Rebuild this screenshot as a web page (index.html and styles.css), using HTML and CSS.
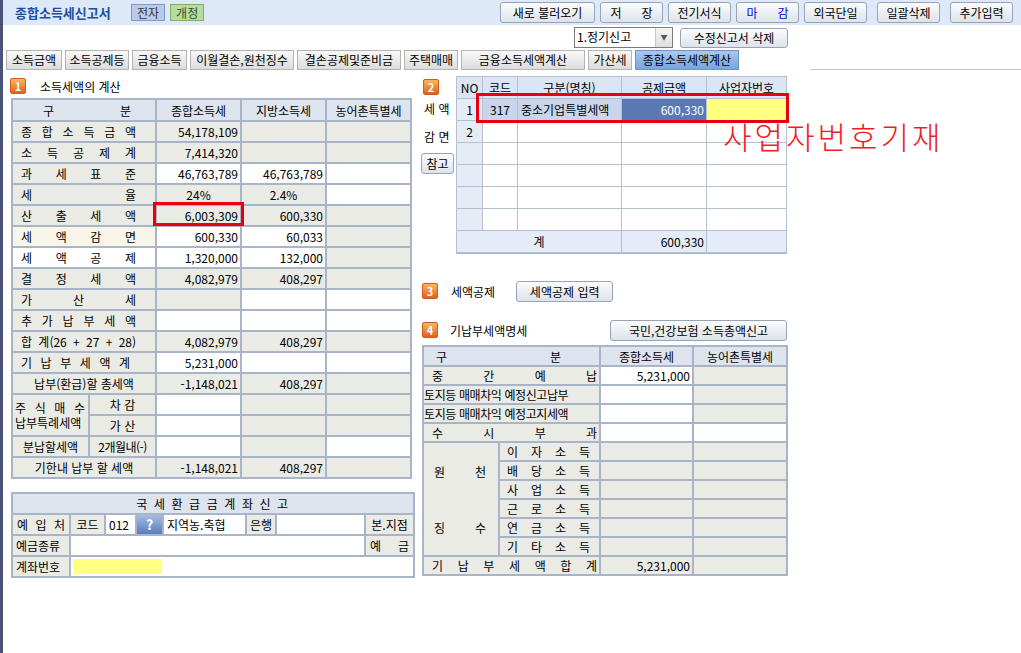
FILE: index.html
```html
<!DOCTYPE html>
<html lang="ko">
<head>
    <meta charset="UTF-8">
    <title>종합소득세신고서</title>
    <link rel="stylesheet" href="styles.css">
</head>
<body>
<div class="page">
    <header class="topbar">
        <h1>종합소득세신고서</h1>
        <span class="tag tag-blue">전자</span>
        <span class="tag tag-green">개정</span>
        <div class="top-actions">
            <button class="btn b-reload">새로 불러오기</button>
            <button class="btn b-save">저&nbsp;&nbsp;&nbsp;&nbsp;&nbsp;&nbsp;장</button>
            <button class="btn b-std">전기서식</button>
            <button class="btn b-close">마&nbsp;&nbsp;&nbsp;&nbsp;&nbsp;&nbsp;감</button>
            <button class="btn b-std">외국단일</button>
            <button class="btn b-std b-gap">일괄삭제</button>
            <button class="btn b-std b-gap">추가입력</button>
        </div>
    </header>

    <div class="subbar">
        <div class="select">
            <span class="select-text">1.정기신고</span>
            <span class="select-arrow">▼</span>
        </div>
        <button class="btn b-delete">수정신고서 삭제</button>
    </div>

    <nav class="tabs">
        <span class="tab t56">소득금액</span>
        <span class="tab t64">소득공제등</span>
        <span class="tab t55">금융소득</span>
        <span class="tab t104">이월결손,원천징수</span>
        <span class="tab t104">결손공제및준비금</span>
        <span class="tab t54">주택매매</span>
        <span class="tab t124">금융소득세액계산</span>
        <span class="tab t44">가산세</span>
        <span class="tab t104 active">종합소득세액계산</span>
        <span class="tab-line"></span>
    </nav>

    <div class="main">
        <!-- left column -->
        <div class="col-left">
            <div class="sec-head">
                <span class="badge">1</span>
                <span class="sec-title">소득세액의 계산</span>
            </div>
            <div class="calc-wrap">
                <table class="grid calc">
                    <colgroup><col class="c77"><col class="c67"><col class="c85"><col class="c85"><col class="c85"></colgroup>
                    <tr class="hd"><th colspan="2" class="sp gubun">구 분</th><th>종합소득세</th><th>지방소득세</th><th>농어촌특별세</th></tr>
                    <tr><td colspan="2" class="sp">종 합 소 득 금 액</td><td class="n">54,178,109</td><td></td><td></td></tr>
                    <tr><td colspan="2" class="sp">소 득 공 제 계</td><td class="n">7,414,320</td><td></td><td></td></tr>
                    <tr><td colspan="2" class="sp">과 세 표 준</td><td class="n w">46,763,789</td><td class="n w">46,763,789</td><td class="w"></td></tr>
                    <tr><td colspan="2" class="sp">세 율</td><td class="c">24%</td><td class="c">2.4%</td><td class="w"></td></tr>
                    <tr><td colspan="2" class="sp">산 출 세 액</td><td class="n">6,003,309</td><td class="n">600,330</td><td></td></tr>
                    <tr><td colspan="2" class="sp y">세 액 감 면</td><td class="n w">600,330</td><td class="n w">60,033</td><td></td></tr>
                    <tr><td colspan="2" class="sp w">세 액 공 제</td><td class="n w">1,320,000</td><td class="n w">132,000</td><td></td></tr>
                    <tr><td colspan="2" class="sp">결 정 세 액</td><td class="n">4,082,979</td><td class="n">408,297</td><td></td></tr>
                    <tr><td colspan="2" class="sp">가 산 세</td><td></td><td class="w"></td><td class="w"></td></tr>
                    <tr><td colspan="2" class="sp">추 가 납 부 세 액</td><td class="w"></td><td class="w"></td><td class="w"></td></tr>
                    <tr><td colspan="2" class="sp">합 계(26 + 27 + 28)</td><td class="n">4,082,979</td><td class="n">408,297</td><td></td></tr>
                    <tr><td colspan="2" class="sp narrow">기 납 부 세 액 계</td><td class="n w">5,231,000</td><td class="w"></td><td class="w"></td></tr>
                    <tr><td colspan="2" class="c">납부(환급)할 총세액</td><td class="n">-1,148,021</td><td class="n">408,297</td><td></td></tr>
                    <tr><td rowspan="2" class="sp two">주 식 매 수<br>납부특례세액</td><td class="c">차 감</td><td class="w"></td><td></td><td></td></tr>
                    <tr><td class="c">가 산</td><td class="w"></td><td></td><td></td></tr>
                    <tr><td class="c">분납할세액</td><td class="c small">2개월내(-)</td><td class="w"></td><td></td><td class="w"></td></tr>
                    <tr><td colspan="2" class="c">기한내 납부 할 세액</td><td class="n">-1,148,021</td><td class="n">408,297</td><td></td></tr>
                </table>
                <div class="mark mark-calc"></div>
            </div>

            <table class="grid account">
                <colgroup><col class="c58"><col class="c35"><col class="c31"><col class="c27"><col class="c83"><col class="c30"><col class="c89"><col class="c49"></colgroup>
                <tr class="hd"><th colspan="8" class="spaced">국 세 환 급 금 계 좌 신 고</th></tr>
                <tr><td class="sp">예 입 처</td><td class="c">코드</td><td class="w">012</td><td class="qcell"><span class="qbtn">?</span></td><td class="w">지역농.축협</td><td class="c">은행</td><td class="w"></td><td class="c">본.지점</td></tr>
                <tr><td>예금종류</td><td colspan="6" class="w"></td><td class="sp">예 금</td></tr>
                <tr><td>계좌번호</td><td colspan="7" class="w"><span class="hl"></span></td></tr>
            </table>
        </div>

        <!-- right column -->
        <div class="col-right">
            <div class="sec2">
                <div class="side">
                    <span class="badge">2</span>
                    <span class="side-label">세 액</span>
                    <span class="side-label gap">감 면</span>
                    <button class="btn b-ref">참고</button>
                </div>
                <div class="list-box">
                    <table class="list">
                        <colgroup><col class="c26"><col class="c35"><col class="c104"><col class="c85"><col class="c80"></colgroup>
                        <tr class="hd"><th>NO</th><th>코드</th><th>구분(명칭)</th><th>공제금액</th><th>사업자번호</th></tr>
                        <tr><td class="no">1</td><td class="sel c">317</td><td class="sel">중소기업특별세액</td><td class="cur n">600,330</td><td class="yel"></td></tr>
                        <tr><td class="no">2</td><td></td><td></td><td></td><td></td></tr>
                        <tr><td class="no"></td><td></td><td></td><td></td><td></td></tr>
                        <tr><td class="no"></td><td></td><td></td><td></td><td></td></tr>
                        <tr><td class="no"></td><td></td><td></td><td></td><td></td></tr>
                        <tr><td class="no"></td><td></td><td></td><td></td><td></td></tr>
                        <tr class="total"><td colspan="3" class="c">계</td><td class="n">600,330</td><td></td></tr>
                    </table>
                </div>
                <div class="mark mark-row"></div>
                <span class="note">사업자번호기재</span>
            </div>

            <div class="sec-head sec3">
                <span class="badge">3</span>
                <span class="sec-title">세액공제</span>
                <button class="btn b-credit">세액공제 입력</button>
            </div>

            <div class="sec-head sec4">
                <span class="badge">4</span>
                <span class="sec-title">기납부세액명세</span>
                <button class="btn b-report">국민,건강보험 소득총액신고</button>
            </div>

            <table class="grid prepaid">
                <colgroup><col class="c76"><col class="c101"><col class="c93"><col class="c94"></colgroup>
                <tr class="hd"><th colspan="2" class="sp gubun4">구 분</th><th>종합소득세</th><th>농어촌특별세</th></tr>
                <tr><td colspan="2" class="sp p4">중 간 예 납</td><td class="n w">5,231,000</td><td></td></tr>
                <tr><td colspan="2" class="tight">토지등 매매차익 예정신고납부</td><td class="w"></td><td></td></tr>
                <tr><td colspan="2" class="tight">토지등 매매차익 예정고지세액</td><td class="w"></td><td></td></tr>
                <tr><td colspan="2" class="sp p4">수 시 부 과</td><td class="w"></td><td class="w"></td></tr>
                <tr><td rowspan="6" class="src"><div class="src-in"><span class="sp-line">원 천</span><span class="sp-line">징 수</span></div></td><td class="sp sub">이 자 소 득</td><td></td><td></td></tr>
                <tr><td class="sp sub">배 당 소 득</td><td></td><td></td></tr>
                <tr><td class="sp sub">사 업 소 득</td><td></td><td></td></tr>
                <tr><td class="sp sub">근 로 소 득</td><td></td><td></td></tr>
                <tr><td class="sp sub">연 금 소 득</td><td></td><td></td></tr>
                <tr><td class="sp sub">기 타 소 득</td><td></td><td></td></tr>
                <tr><td colspan="2" class="sp p4">기 납 부 세 액 합 계</td><td class="n">5,231,000</td><td></td></tr>
            </table>
        </div>
    </div>
</div>
</body>
</html>
```

FILE: styles.css
```css
body {
    margin: 0;
    font-family: "Noto Sans CJK KR", "Noto Sans", sans-serif;
    font-size: 12px;
    color: #000;
    background-color: #fff;
}

.page {
    border-left: 3px solid #4b5478;
    min-height: 653px;
    box-sizing: border-box;
}

/* top bar */
.topbar {
    height: 25px;
    background-color: #dde8f8;
    display: flex;
    align-items: center;
    padding-left: 12px;
}

.topbar h1 {
    margin: 0 14px 0 0;
    font-size: 13px;
    color: #1c4f9f;
    width: 102px;
    white-space: nowrap;
}

.tag {
    height: 17px;
    line-height: 16px;
    box-sizing: border-box;
    padding: 0 5px;
    margin-right: 5px;
    border: 1px solid;
    color: #333;
}

.tag-blue {
    background-color: #b9cbe8;
    border-color: #7f9cc9;
}

.tag-green {
    background-color: #b7dca0;
    border-color: #7fae66;
    color: #2f4f2f;
}

.top-actions {
    margin-left: auto;
    padding-right: 8px;
    display: flex;
    gap: 5px;
}

.btn {
    font-family: "Noto Sans CJK KR", sans-serif;
    font-size: 12px;
    height: 21px;
    padding: 0;
    border: 1px solid #98a4b6;
    border-radius: 3px;
    background: linear-gradient(#fbfcfd, #dde3eb);
    color: #000;
    white-space: nowrap;
}

.b-reload { width: 95px; }
.b-save { width: 63px; }
.b-std { width: 63px; }
.b-close { width: 63px; color: #0000e0; }
.b-gap { margin-left: 5px; }

/* sub bar */
.subbar {
    height: 25px;
    display: flex;
    align-items: center;
    justify-content: flex-end;
    padding-right: 233px;
    gap: 7px;
}

.select {
    width: 99px;
    height: 21px;
    box-sizing: border-box;
    border: 1px solid #7a7a7a;
    display: flex;
    background-color: #fff;
}

.select-text {
    flex: 1;
    line-height: 18px;
    padding-left: 2px;
}

.select-arrow {
    width: 16px;
    border-left: 1px solid #c8c8c8;
    background: linear-gradient(#f6f6f6, #dedede);
    font-size: 7px;
    color: #555;
    text-align: center;
    line-height: 19px;
}

.b-delete { width: 108px; height: 20px; }

/* tabs */
.tabs {
    display: flex;
    gap: 3px;
    padding-left: 3px;
    height: 21px;
}

.tab {
    height: 20px;
    box-sizing: border-box;
    border: 1px solid #b4b4b4;
    background: linear-gradient(#f8f8f8, #dcdcdc);
    text-align: center;
    line-height: 18px;
    white-space: nowrap;
}

.tab.active {
    background: linear-gradient(#a9c8ef, #77a5dc);
    border-color: #6d93c7;
}

.t44 { width: 44px; }
.t54 { width: 54px; }
.t55 { width: 55px; }
.t56 { width: 56px; }
.t64 { width: 64px; }
.t104 { width: 104px; }
.t124 { width: 124px; }

.tab-line {
    margin-left: auto;
    width: 211px;
    height: 1px;
    align-self: flex-end;
    background-color: #c8c8c8;
    margin-bottom: 1px;
}

/* main */
.main {
    display: flex;
    padding-top: 5px;
}

.col-left {
    width: 410px;
    padding-left: 8px;
}

.col-right {
    width: 366px;
}

.sec-head {
    display: flex;
    align-items: center;
    height: 20px;
}

.badge {
    width: 16px;
    height: 16px;
    box-sizing: border-box;
    border: 1px solid #d25a1c;
    border-radius: 2px;
    background: linear-gradient(#fbb662, #e4601c);
    color: #fff;
    font-weight: bold;
    font-size: 11px;
    line-height: 14px;
    text-align: center;
    flex-shrink: 0;
}

.col-left .sec-head .badge {
    margin-left: -1px;
}

.sec-title {
    margin-left: 14px;
    white-space: nowrap;
}

/* grid tables */
.grid {
    border-collapse: collapse;
    table-layout: fixed;
}

.grid th,
.grid td {
    border: 2px solid #a9b4c9;
    padding: 0 3px;
    font-weight: normal;
    white-space: nowrap;
    overflow: hidden;
    background-color: #ebebe6;
}

.grid tr.hd th {
    background-color: #dde4ee;
}

.grid td.w { background-color: #fff; }
.grid td.y { background-color: #f8f6e8; }

.grid .n { text-align: right; padding-right: 2px; }
.grid .c { text-align: center; }

.sp {
    text-align: justify;
    text-align-last: justify;
}

.calc-wrap {
    position: relative;
    margin-top: 2px;
}

.calc { width: 399px; }
.calc tr { height: 21px; }
.calc tr.hd { height: 22px; }
.calc td.sp { padding-left: 8px; padding-right: 19px; }
.calc th.gubun { padding-left: 30px; padding-right: 24px; }
.calc td.narrow { padding-right: 25px; }
.calc td.two { line-height: 15px; padding-left: 2px; padding-right: 3px; }
.calc td.small { letter-spacing: -0.5px; padding: 0; }

.c77 { width: 77px; }
.c67 { width: 67px; }
.c85 { width: 85px; }

.mark {
    position: absolute;
    border: 3px solid #e8000f;
    box-sizing: border-box;
    pointer-events: none;
}

.mark-calc {
    left: 142px;
    top: 104px;
    width: 91px;
    height: 24px;
}

/* account */
.account {
    width: 402px;
    margin-top: 13px;
}

.account tr { height: 21px; }
.account th.spaced { letter-spacing: 1.6px; }
.account td.sp { padding-left: 4px; padding-right: 4px; }
.account td.qcell { padding: 0; background-color: #fff; }

.qbtn {
    display: block;
    height: 19px;
    line-height: 19px;
    text-align: center;
    background: linear-gradient(#a5bce3, #5a7dbf);
    color: #fff;
    font-weight: bold;
    font-size: 14px;
}

.hl {
    display: block;
    width: 89px;
    height: 15px;
    background-color: #ffff80;
    margin-left: -1px;
}

.c58 { width: 58px; }
.c35 { width: 35px; }
.c31 { width: 31px; }
.c27 { width: 27px; }
.c83 { width: 83px; }
.c30 { width: 30px; }
.c89 { width: 89px; }
.c49 { width: 49px; }

/* section 2 */
.sec2 {
    position: relative;
    display: flex;
}

.side {
    width: 35px;
    display: flex;
    flex-direction: column;
    align-items: flex-start;
}

.side .badge {
    margin: 3px 0 0 2px;
}

.side-label {
    margin-top: 7px;
    margin-left: 3px;
    line-height: 14px;
    white-space: nowrap;
}

.side-label.gap { margin-top: 14px; }

.b-ref {
    width: 33px;
    margin-top: 9px;
}

.list-box {
    width: 331px;
    height: 178px;
    box-sizing: border-box;
    border: 1px solid #a9b4c9;
}

.list {
    border-collapse: collapse;
    table-layout: fixed;
    width: 330px;
    margin-top: -1px;
    margin-left: -1px;
}

.list th,
.list td {
    border: 1px solid #b5bfd0;
    padding: 0 3px;
    font-weight: normal;
    white-space: nowrap;
    overflow: hidden;
    background-color: #fff;
}

.list tr { height: 22px; }
.list tr.hd th { background-color: #dbe5f3; }
.list td.no { background-color: #e6ecf5; text-align: center; }
.list td.sel { background-color: #c8d5eb; }
.list td.cur { background-color: #5b78b5; color: #fff; }
.list td.yel { background-color: #ffff80; }
.list tr.total td { background-color: #e3ecf8; }
.list .n { text-align: right; padding-right: 2px; }
.list .c { text-align: center; }

.c26 { width: 26px; }
.c104 { width: 104px; }
.c80 { width: 80px; }

.mark-row {
    left: 55px;
    top: 17px;
    width: 313px;
    height: 30px;
}

.note {
    position: absolute;
    left: 302px;
    top: 44px;
    font-size: 31px;
    line-height: 1;
    font-weight: 300;
    letter-spacing: 3px;
    color: #ee1c24;
    white-space: nowrap;
}

/* sections 3 and 4 */
.sec3 {
    margin-top: 26px;
    height: 22px;
}

.sec3 .badge,
.sec4 .badge {
    margin-left: 1px;
}

.sec3 .sec-title { margin-left: 13px; }

.b-credit {
    width: 97px;
    margin-left: 21px;
}

.sec4 {
    margin-top: 17px;
    height: 22px;
}

.sec4 .sec-title { margin-left: 12px; }

.b-report {
    width: 177px;
    margin-left: auto;
}

.prepaid {
    width: 364px;
    margin-top: 4px;
    margin-left: 1px;
}

.prepaid tr { height: 19px; }
.prepaid tr.hd { height: 20px; }
.prepaid th.gubun4 { padding-left: 12px; padding-right: 38px; }
.prepaid td.p4 { padding-left: 8px; padding-right: 2px; }
.prepaid td.tight { padding: 0; letter-spacing: -0.4px; }
.prepaid td.sub { padding-left: 7px; padding-right: 9px; }
.prepaid td.src { padding: 0 12px 0 10px; }

.src-in {
    height: 112px;
    display: flex;
    flex-direction: column;
    justify-content: space-around;
}

.sp-line {
    display: block;
    text-align: justify;
    text-align-last: justify;
}

.c76 { width: 76px; }
.c101 { width: 101px; }
.c93 { width: 93px; }
.c94 { width: 94px; }
```
